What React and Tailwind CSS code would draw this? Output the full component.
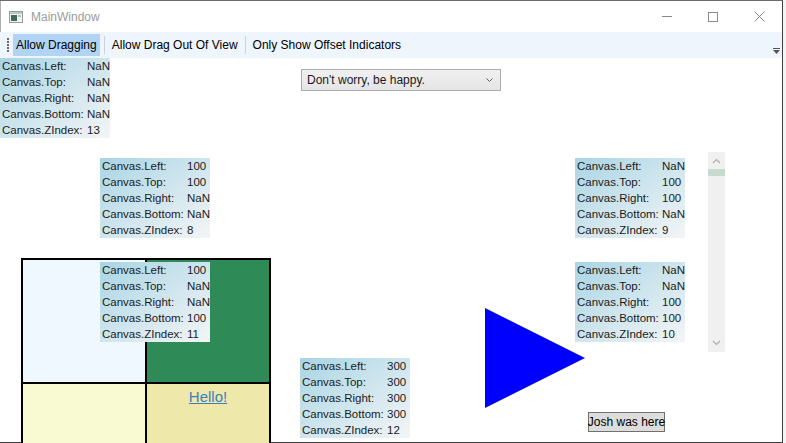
import React from "react";

function InfoBox({ className, rows }) {
  const labels = ["Canvas.Left:", "Canvas.Top:", "Canvas.Right:", "Canvas.Bottom:", "Canvas.ZIndex:"];
  return (
    <div
      className={
        "absolute w-[110px] grid grid-cols-[85px_auto] pl-[2px] text-[11.5px] leading-[16px] text-[#1b1b1b] bg-linear-to-br from-[#a9d5e5] to-[#f3f5f6] " +
        className
      }
    >
      {labels.map((l, i) => (
        <React.Fragment key={l}>
          <span className="whitespace-nowrap">{l}</span>
          <span className="whitespace-nowrap">{rows[i]}</span>
        </React.Fragment>
      ))}
    </div>
  );
}

export default function App() {
  return (
    <div className="w-[786px] h-[443px] bg-[#f4f4f4] relative overflow-hidden font-['Liberation_Sans',Arial,sans-serif]">
      <div className="flex flex-col w-[783px] h-[443px] bg-white border-t border-t-[#6b6b6b] border-r border-r-[#3f3f3f] border-b border-b-[#3f3f3f]">
        {/* Title bar */}
        <div className="h-[31px] flex items-center shrink-0 border-l border-l-[#b0b0b0]">
          <svg width="14" height="12" viewBox="0 0 14 12" className="ml-[8px]">
            <rect x="0.5" y="0.5" width="13" height="11" fill="#f4f4f4" stroke="#9a9a9a" />
            <rect x="1" y="1" width="12" height="2" fill="#c4c4c4" />
            <rect x="2" y="4" width="6" height="6" fill="#3d6b5c" />
            <rect x="9" y="4" width="3" height="2" fill="#a9c4d2" />
          </svg>
          <span className="ml-[8px] text-[12px] text-[#9b9b9b]">MainWindow</span>
          <div className="ml-auto flex items-center h-full">
            <div className="w-[46px] h-full flex items-center justify-center">
              <div className="w-[10px] h-px bg-[#8a8a8a]" />
            </div>
            <div className="w-[46px] h-full flex items-center justify-center">
              <div className="w-[10px] h-[10px] border border-[#8a8a8a]" />
            </div>
            <div className="w-[46px] h-full flex items-center justify-center">
              <svg width="11" height="11" viewBox="0 0 11 11">
                <path d="M0.5 0.5 L10.5 10.5 M10.5 0.5 L0.5 10.5" stroke="#8a8a8a" strokeWidth="1" />
              </svg>
            </div>
          </div>
        </div>
        {/* Toolbar */}
        <div className="h-[26px] shrink-0 bg-[#eef5fd] flex items-center text-[12px] text-black relative">
          <div className="ml-[6px] w-[3px] flex flex-col gap-[1px] items-center">
            <div className="w-[2px] h-[2px] bg-[#6b6b6b]" />
            <div className="w-[2px] h-[2px] bg-[#6b6b6b]" />
            <div className="w-[2px] h-[2px] bg-[#6b6b6b]" />
            <div className="w-[2px] h-[2px] bg-[#6b6b6b]" />
            <div className="w-[2px] h-[2px] bg-[#6b6b6b]" />
          </div>
          <div className="ml-[4px] h-[22px] px-[3px] flex items-center bg-[#b1d4f4]">Allow Dragging</div>
          <div className="mx-[4px] w-px h-[18px] bg-[#c9d3dc]" />
          <div className="h-[22px] px-[3px] flex items-center">Allow Drag Out Of View</div>
          <div className="mx-[4px] w-px h-[18px] bg-[#c9d3dc]" />
          <div className="h-[22px] px-[3px] flex items-center">Only Show Offset Indicators</div>
          <div className="absolute right-[2px] bottom-[4px] flex flex-col items-center">
            <div className="w-[7px] h-px bg-[#555]" />
            <svg width="7" height="4" viewBox="0 0 7 4" className="mt-[1px]">
              <path d="M0 0 L7 0 L3.5 4 Z" fill="#555" />
            </svg>
          </div>
        </div>
        {/* Canvas */}
        <div className="relative flex-1">
          <InfoBox className="left-0 top-0" rows={["NaN", "NaN", "NaN", "NaN", "13"]} />

          <div className="absolute left-[301px] top-[11px] w-[200px] h-[22px] border border-[#acacac] bg-linear-to-b from-[#f0f0f0] to-[#e5e5e5] flex items-center text-[12px] text-[#1a1a1a]">
            <span className="ml-[5px]">Don't worry, be happy.</span>
            <svg width="7" height="4" viewBox="0 0 7 4" className="ml-auto mr-[7px]">
              <path d="M0.5 0.5 L3.5 3.5 L6.5 0.5" stroke="#606060" fill="none" strokeWidth="1" />
            </svg>
          </div>

          <InfoBox className="left-[100px] top-[100px]" rows={["100", "100", "NaN", "NaN", "8"]} />
          <InfoBox className="left-[575px] top-[100px]" rows={["NaN", "100", "100", "NaN", "9"]} />
          <InfoBox className="left-[575px] top-[204px]" rows={["NaN", "NaN", "100", "100", "10"]} />

          {/* Scrollbar */}
          <div className="absolute left-[708px] top-[94px] w-[17px] h-[200px] bg-[#f0f0f0] flex flex-col items-center">
            <svg width="9" height="6" viewBox="0 0 9 6" className="mt-[6px]">
              <path d="M1 5 L4.5 1.5 L8 5" stroke="#a8b0ad" fill="none" strokeWidth="1.2" />
            </svg>
            <div className="mt-[5px] w-[17px] h-[7px] bg-[#c6dacf]" />
            <svg width="9" height="6" viewBox="0 0 9 6" className="mt-auto mb-[6px]">
              <path d="M1 1 L4.5 4.5 L8 1" stroke="#a8b0ad" fill="none" strokeWidth="1.2" />
            </svg>
          </div>

          {/* Squares */}
          <div className="absolute left-[21px] top-[200px] w-[250px] h-[250px] border-2 border-black bg-black grid grid-cols-2 grid-rows-2 gap-[2px]">
            <div className="bg-[#f0f8ff]" />
            <div className="bg-[#2e8b57]" />
            <div className="bg-[#fafad2]" />
            <div className="bg-[#eee8aa] flex justify-center">
              <span className="mt-[3px] text-[15px] leading-[20px] text-[#3a7fc0] underline">Hello!</span>
            </div>
          </div>

          <InfoBox className="left-[100px] top-[204px]" rows={["100", "NaN", "NaN", "100", "11"]} />

          <svg width="100" height="100" viewBox="0 0 100 100" className="absolute left-[485px] top-[250px]">
            <polygon points="0,0 100,50 0,100" fill="#0000ff" />
          </svg>

          <InfoBox className="left-[300px] top-[300px]" rows={["300", "300", "300", "300", "12"]} />

          <div className="absolute left-[588px] top-[354px] w-[77px] h-[20px] border border-[#707070] bg-[#dddddd] flex items-center justify-center text-[12px] text-black whitespace-nowrap">
            Josh was here
          </div>
        </div>
      </div>
    </div>
  );
}
